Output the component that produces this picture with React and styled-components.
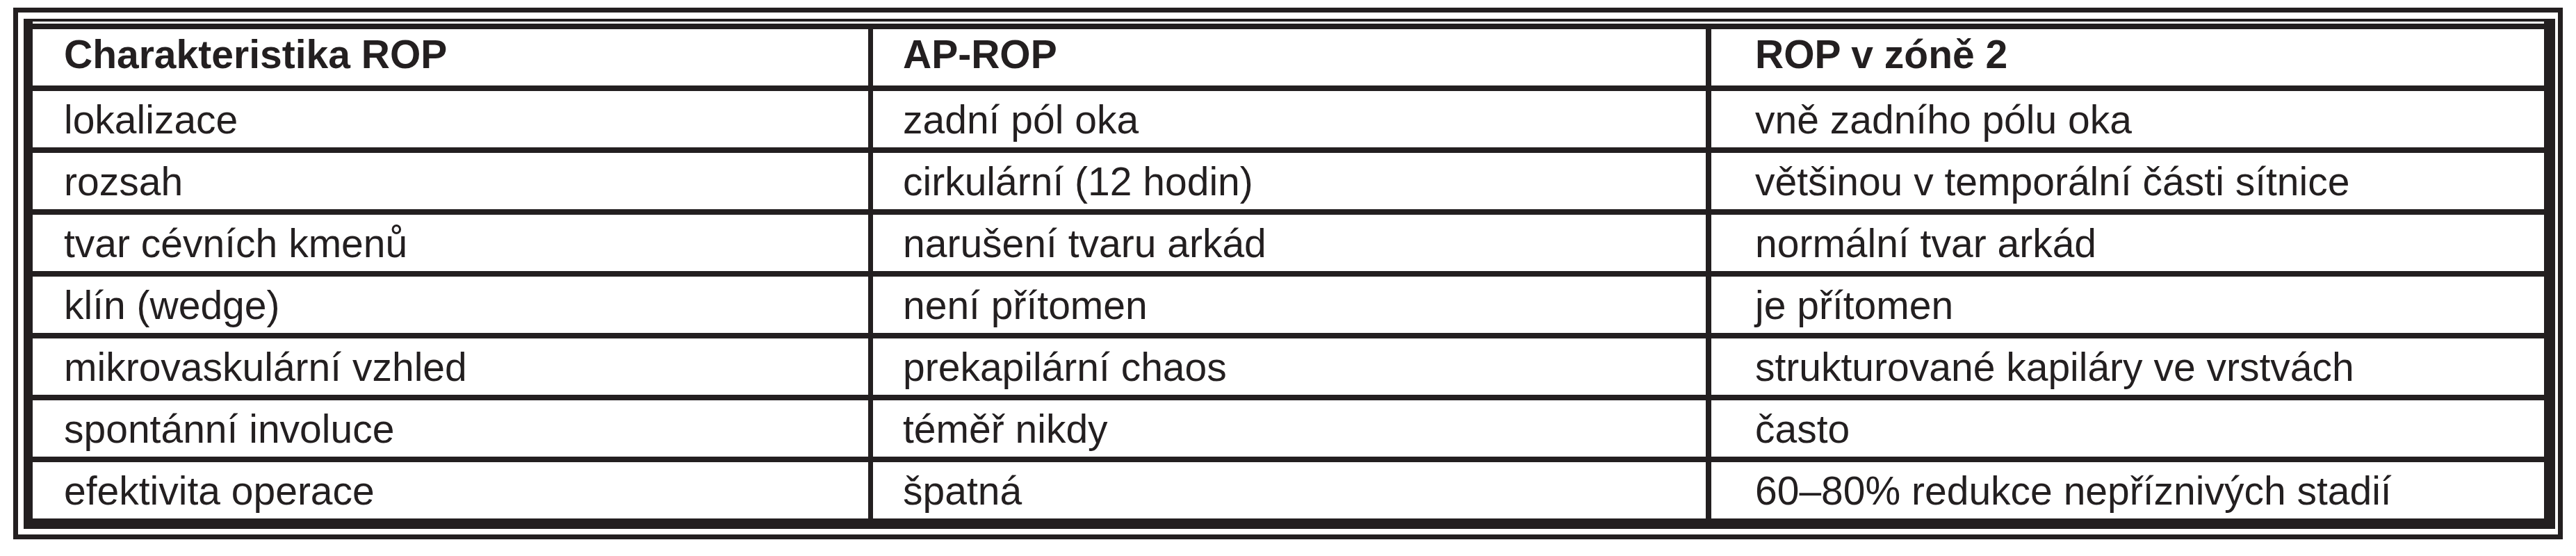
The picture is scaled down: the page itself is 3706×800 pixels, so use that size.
import React from "react";
import styled, { createGlobalStyle } from "styled-components";

const GlobalStyle = createGlobalStyle`
  body {
    margin: 0;
    background: #ffffff;
    font-family: "Liberation Sans", Arial, sans-serif;
  }
`;

const INK = "#231f20";

const Page = styled.div`
  padding: 11px 0 0 19px;
`;

const OuterFrame = styled.div`
  width: 3668px;
  box-sizing: border-box;
  border: 7px solid ${INK};
  padding: 9px 4px 8px 8px;
`;

const InnerFrame = styled.div`
  border-style: solid;
  border-color: ${INK};
  border-width: 4px 16px 15px 13px;
  padding-top: 3px;
`;

const Row = styled.div`
  display: grid;
  grid-template-columns: 1202px 1205px 1205px;
  border-top: 8px solid ${INK};
`;

const Cell = styled.div`
  height: 81px;
  box-sizing: border-box;
  display: flex;
  align-items: center;
  padding-left: ${(p) => p.$pad}px;
  padding-bottom: ${(p) => (p.$head ? "10px" : "0")};
  border-left: ${(p) => (p.$line ? `${p.$line}px solid ${INK}` : "none")};
  font-size: 57px;
  font-weight: ${(p) => (p.$head ? 700 : 400)};
  color: ${INK};
  white-space: nowrap;
`;

const header = ["Charakteristika ROP", "AP-ROP", "ROP v zóně 2"];

const rows = [
  ["lokalizace", "zadní pól oka", "vně zadního pólu oka"],
  ["rozsah", "cirkulární (12 hodin)", "většinou v temporální části sítnice"],
  ["tvar cévních kmenů", "narušení tvaru arkád", "normální tvar arkád"],
  ["klín (wedge)", "není přítomen", "je přítomen"],
  ["mikrovaskulární vzhled", "prekapilární chaos", "strukturované kapiláry ve vrstvách"],
  ["spontánní involuce", "téměř nikdy", "často"],
  ["efektivita operace", "špatná", "60–80% redukce nepříznivých stadií"],
];

// divider width and text inset for each column
const columns = [
  { line: 0, pad: 45 },
  { line: 7, pad: 43 },
  { line: 8, pad: 63 },
];

const TableRow = ({ cells, head }) => (
  <Row>
    {cells.map((text, i) => (
      <Cell key={i} $line={columns[i].line} $pad={columns[i].pad} $head={head}>
        {text}
      </Cell>
    ))}
  </Row>
);

const App = () => {
  return (
    <Page>
      <GlobalStyle />
      <OuterFrame>
        <InnerFrame>
          <TableRow cells={header} head />
          {rows.map((r, idx) => (
            <TableRow key={idx} cells={r} />
          ))}
        </InnerFrame>
      </OuterFrame>
    </Page>
  );
};

export default App;
